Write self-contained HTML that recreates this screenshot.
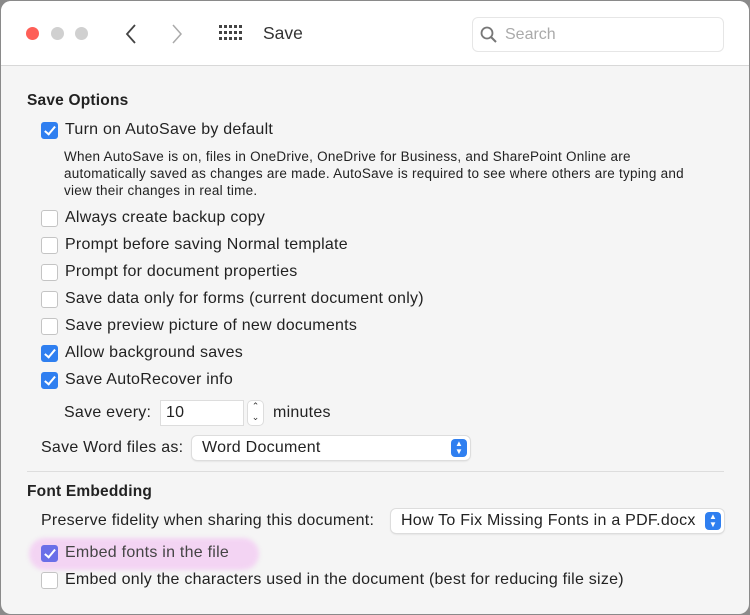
<!DOCTYPE html><html><head><style>
body{margin:0;width:750px;height:615px;background:#8a8a8a;font-family:"Liberation Sans",sans-serif;position:relative;overflow:hidden}
.win{position:absolute;left:1px;top:1px;width:748px;height:613px;background:#f5f5f5;border-radius:10px;overflow:hidden}
.tb{position:absolute;left:0;top:0;width:748px;height:64px;background:#fff;border-bottom:1px solid #d8d8d8}
.a{position:absolute;white-space:nowrap;color:#222}
.t{font-size:16px;letter-spacing:0.25px}
.s{font-size:13.5px;letter-spacing:0.25px;color:#222}
.b{font-weight:bold;font-size:15.5px;letter-spacing:0.2px}
.cb{position:absolute;width:15px;height:15px;border:1px solid #c4c4c4;border-radius:3px;background:#fff}
.on{background:#2f7ff0;border-color:#2f7ff0}
.on::after{content:"";position:absolute;left:5px;top:1px;width:4px;height:9px;border:solid #fff;border-width:0 2px 2px 0;transform:rotate(40deg)}
.sel{position:absolute;background:#fff;border-radius:5px;box-shadow:0 0 0 1px #ddd,0 1px 2px rgba(0,0,0,.15);height:24px}
.arr{position:absolute;right:3px;top:3px;width:16px;height:18px;background:#2f7ff0;border-radius:4px;color:#fff;font-size:8px;line-height:8px;text-align:center;padding-top:1px;box-sizing:border-box}
.dot{position:absolute;width:13px;height:13px;border-radius:50%}
</style></head><body><div class="win">
<div class="tb">
<div class="dot" style="left:25px;top:26px;background:#fe5f57"></div>
<div class="dot" style="left:50px;top:26px;background:#d0d0d0"></div>
<div class="dot" style="left:74px;top:26px;background:#d0d0d0"></div>
<svg style="position:absolute;left:122px;top:22px" width="16" height="22"><path d="M12 2 L4 11 L12 20" fill="none" stroke="#444" stroke-width="1.8"/></svg>
<svg style="position:absolute;left:168px;top:22px" width="16" height="22"><path d="M4 2 L12 11 L4 20" fill="none" stroke="#aaa" stroke-width="1.5"/></svg>
<svg style="position:absolute;left:218px;top:24px" width="24" height="18" fill="#444"><g id="r"><rect x="0" y="0" width="3" height="3"/><rect x="5" y="0" width="3" height="3"/><rect x="10" y="0" width="3" height="3"/><rect x="15" y="0" width="3" height="3"/><rect x="20" y="0" width="3" height="3"/></g><use href="#r" y="6"/><use href="#r" y="12"/></svg>
<div class="a" style="left:262px;top:22px;font-size:17.5px;color:#333">Save</div>
<div style="position:absolute;left:471px;top:16px;width:250px;height:33px;border:1px solid #e6e6e6;border-radius:6px;background:#fff"></div>
<svg style="position:absolute;left:479px;top:25px" width="18" height="18"><circle cx="7" cy="7" r="5.5" fill="none" stroke="#777" stroke-width="1.8"/><path d="M11 11 L16 16" stroke="#777" stroke-width="2"/></svg>
<div class="a" style="left:504px;top:25px;font-size:16px;color:#aaa">Search</div>
</div>
<div class="a b" style="left:26px;top:91px">Save Options</div>
<div class="cb on" style="left:40px;top:121px"></div><div class="a t" style="left:64px;top:120px">Turn on AutoSave by default</div>
<div class="a s" style="left:63px;top:147px;line-height:17px">When AutoSave is on, files in OneDrive, OneDrive for Business, and SharePoint Online are<br>automatically saved as changes are made. AutoSave is required to see where others are typing and<br>view their changes in real time.</div>
<div class="cb" style="left:40px;top:209px"></div><div class="a t" style="left:64px;top:208px">Always create backup copy</div>
<div class="cb" style="left:40px;top:236px"></div><div class="a t" style="left:64px;top:235px">Prompt before saving Normal template</div>
<div class="cb" style="left:40px;top:263px"></div><div class="a t" style="left:64px;top:262px">Prompt for document properties</div>
<div class="cb" style="left:40px;top:290px"></div><div class="a t" style="left:64px;top:289px">Save data only for forms (current document only)</div>
<div class="cb" style="left:40px;top:317px"></div><div class="a t" style="left:64px;top:316px">Save preview picture of new documents</div>
<div class="cb on" style="left:40px;top:344px"></div><div class="a t" style="left:64px;top:343px">Allow background saves</div>
<div class="cb on" style="left:40px;top:371px"></div><div class="a t" style="left:64px;top:370px">Save AutoRecover info</div>
<div class="a t" style="left:63px;top:403px">Save every:</div>
<div style="position:absolute;left:160px;top:400px;width:82px;height:24px;background:#fff;box-shadow:0 0 0 1px #ddd"></div>
<div class="a t" style="left:165px;top:403px">10</div>
<div style="position:absolute;left:247px;top:400px;width:15px;height:24px;background:#fff;border-radius:4px;box-shadow:0 0 0 1px #ddd;font-size:9px;text-align:center;line-height:11px;color:#333">⌃<br>⌄</div>
<div class="a t" style="left:272px;top:403px">minutes</div>
<div class="a t" style="left:40px;top:438px">Save Word files as:</div>
<div class="sel" style="left:191px;top:435px;width:278px"><div class="a t" style="left:10px;top:3px">Word Document</div><div class="arr">▲<br>▼</div></div>
<div style="position:absolute;left:26px;top:470px;width:697px;height:1px;background:#ddd"></div>
<div class="a b" style="left:26px;top:482px">Font Embedding</div>
<div class="a t" style="left:40px;top:511px">Preserve fidelity when sharing this document:</div>
<div class="sel" style="left:390px;top:508px;width:333px"><div class="a t" style="left:10px;top:3px">How To Fix Missing Fonts in a PDF.docx</div><div class="arr">▲<br>▼</div></div>
<div style="position:absolute;left:28px;top:537px;width:230px;height:32px;background:#f3d4f3;border-radius:16px;filter:blur(2px)"></div>
<div class="cb on" style="left:40px;top:544px;background:#6a6fe8;border-color:#6a6fe8"></div><div class="a t" style="left:64px;top:543px;color:#444">Embed fonts in the file</div>
<div class="cb" style="left:40px;top:571px"></div><div class="a t" style="left:64px;top:570px">Embed only the characters used in the document (best for reducing file size)</div>
</div></body></html>
